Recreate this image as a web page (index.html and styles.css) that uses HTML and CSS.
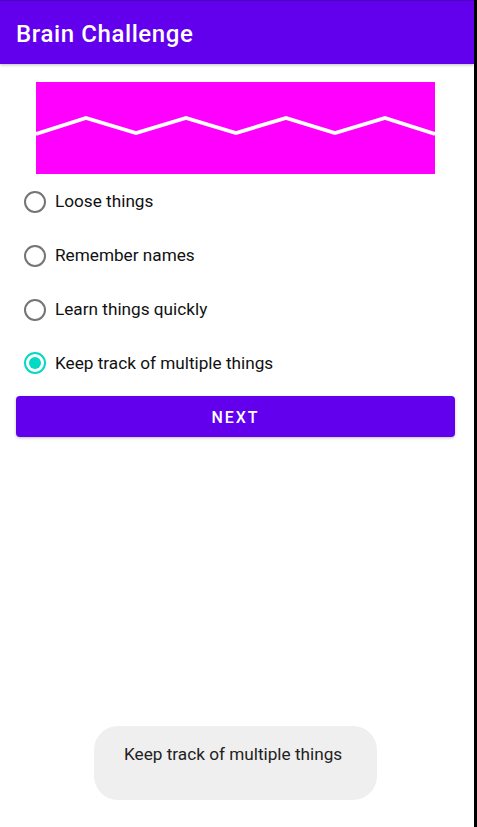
FILE: index.html
```html
<!DOCTYPE html>
<html>
<head>
<meta charset="utf-8">
<link rel="stylesheet" href="styles.css">
</head>
<body>
<div class="screen">
  <header class="appbar"><h1 class="title">Brain Challenge</h1></header>
  <main class="content">
    <div class="banner">
      <svg width="399" height="92" viewBox="0 0 399 92">
        <rect width="399" height="92" fill="#ff00ff"/>
        <polyline points="0,52 50,36 100,51 150,36 200,51 250,36 299,51 349,36 399,52" fill="none" stroke="#ffffff" stroke-width="3.8"/>
      </svg>
    </div>
    <ul class="options">
      <li class="option"><span class="radio"></span><span class="label">Loose things</span></li>
      <li class="option"><span class="radio"></span><span class="label">Remember names</span></li>
      <li class="option"><span class="radio"></span><span class="label">Learn things quickly</span></li>
      <li class="option"><span class="radio checked"></span><span class="label">Keep track of multiple things</span></li>
    </ul>
    <button class="next">NEXT</button>
  </main>
  <div class="toast">Keep track of multiple things</div>
</div>
</body>
</html>
```
FILE: styles.css
```css
html, body {
  margin: 0;
  padding: 0;
  background: #000;
}
.screen {
  position: relative;
  width: 474px;
  height: 827px;
  background: #fff;
  font-family: Roboto, "Noto Sans", sans-serif;
  overflow: hidden;
}
.appbar {
  height: 64px;
  background: #6200ee;
  border-top: 1px solid #4b00c0;
  box-sizing: border-box;
  display: flex;
  align-items: center;
  padding-left: 16px;
  box-shadow: 0 1px 3px rgba(0,0,0,0.25);
  position: relative;
  z-index: 1;
}
.title {
  margin: 0;
  color: #fff;
  font-size: 24px;
  font-weight: 500;
  letter-spacing: 0.6px;
  padding-top: 2px;
}
.content {
  display: flex;
  flex-direction: column;
  padding-top: 18px;
}
.banner {
  margin-left: 36px;
  width: 399px;
  height: 92px;
}
.banner svg { display: block; }
.options {
  list-style: none;
  margin: 0;
  padding: 0;
}
.option {
  height: 54px;
  display: flex;
  align-items: center;
  padding-left: 24px;
}
.radio {
  width: 22px;
  height: 22px;
  box-sizing: border-box;
  border: 2px solid #757575;
  border-radius: 50%;
  margin-right: 9px;
  margin-top: 2px;
  position: relative;
}
.radio.checked {
  border-color: #03dac5;
  margin-top: 0;
}
.radio.checked::after {
  content: "";
  position: absolute;
  left: 3px;
  top: 3px;
  width: 12px;
  height: 12px;
  border-radius: 50%;
  background: #03dac5;
}
.label {
  font-size: 17.2px;
  color: #111;
}
.next {
  margin: 6px 19px 0 16px;
  height: 41px;
  border: none;
  border-radius: 4px;
  background: #6200ee;
  color: #fff;
  font-family: Roboto, sans-serif;
  font-size: 16px;
  font-weight: 500;
  letter-spacing: 2px;
  padding-top: 2px;
  box-shadow: 0 1px 3px rgba(0,0,0,0.25);
}
.toast {
  position: absolute;
  left: 94px;
  top: 726px;
  width: 283px;
  height: 74px;
  box-sizing: border-box;
  padding: 18px 0 0 30px;
  border-radius: 24px;
  background: #efefef;
  color: #222;
  font-size: 17.2px;
}
```
